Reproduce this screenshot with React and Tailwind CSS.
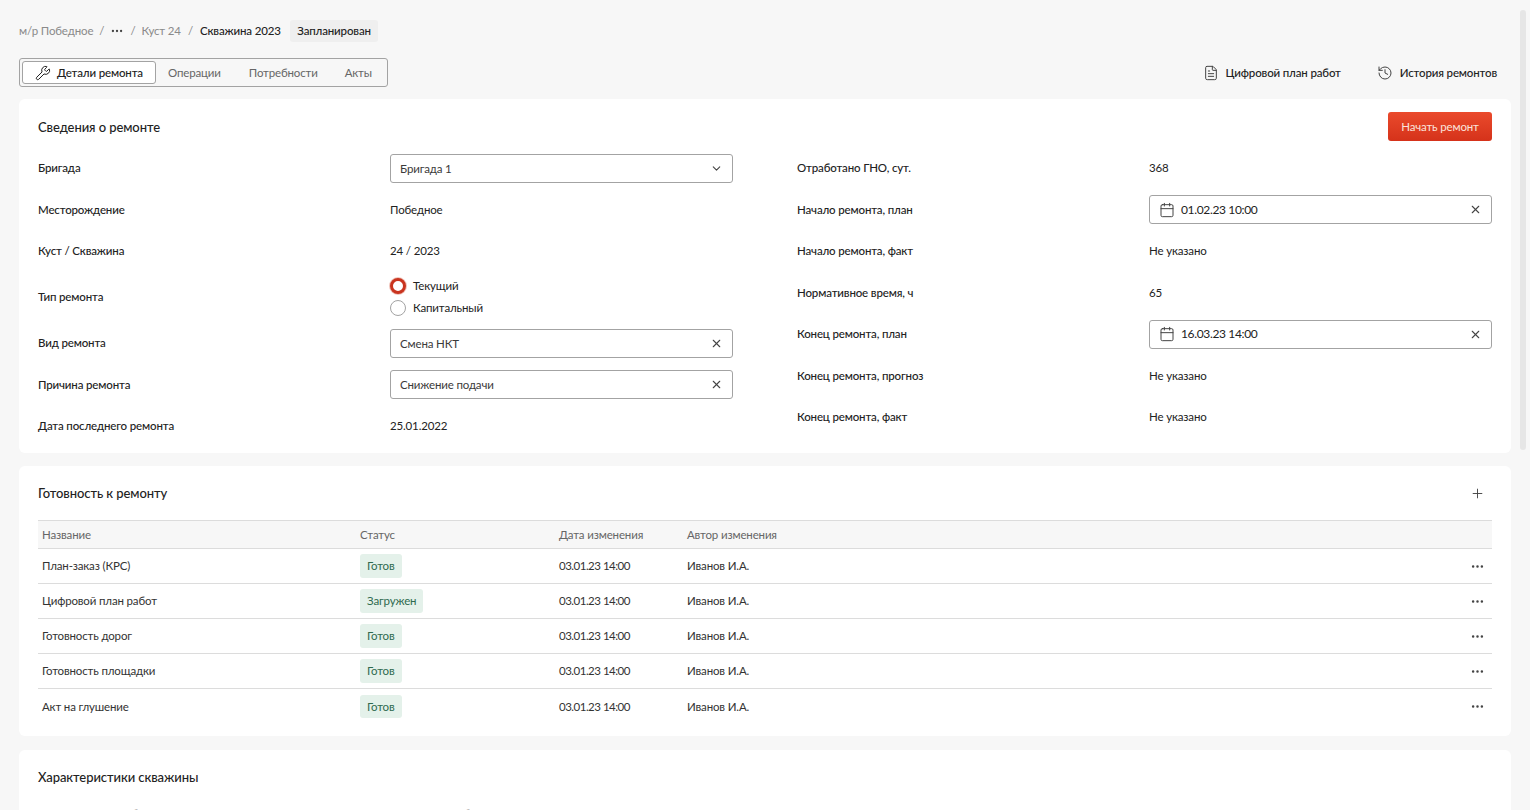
import { Calendar, ChevronDown, Ellipsis, FileText, History, Plus, Wrench, X } from 'lucide-react';

const leftRows = [
  { label: 'Бригада', type: 'select', value: 'Бригада 1' },
  { label: 'Месторождение', value: 'Победное' },
  { label: 'Куст / Скважина', value: '24 / 2023' },
  { label: 'Тип ремонта', type: 'radio' },
  { label: 'Вид ремонта', type: 'input', value: 'Смена НКТ' },
  { label: 'Причина ремонта', type: 'input', value: 'Снижение подачи' },
  { label: 'Дата последнего ремонта', value: '25.01.2022' }
];

const rightRows = [
  { label: 'Отработано ГНО, сут.', value: '368' },
  { label: 'Начало ремонта, план', type: 'date', value: '01.02.23 10:00' },
  { label: 'Начало ремонта, факт', value: 'Не указано' },
  { label: 'Нормативное время, ч', value: '65' },
  { label: 'Конец ремонта, план', type: 'date', value: '16.03.23 14:00' },
  { label: 'Конец ремонта, прогноз', value: 'Не указано' },
  { label: 'Конец ремонта, факт', value: 'Не указано' }
];

const readiness = [
  { name: 'План-заказ (КРС)', status: 'Готов' },
  { name: 'Цифровой план работ', status: 'Загружен' },
  { name: 'Готовность дорог', status: 'Готов' },
  { name: 'Готовность площадки', status: 'Готов' },
  { name: 'Акт на глушение', status: 'Готов' }
];

const wellColumns = ['Искусственный забой', 'Текущий забой', 'Диаметр НКТ', 'Максимальный угол'];

const Field = ({ row }) => {
  if (row.type === 'select' || row.type === 'input') {
    return (
      <div className="flex h-[29px] items-center justify-between rounded-[3px] border border-[#a3a3a3] bg-white pl-[9px] pr-[9px] text-[#3a3a3a]">
        {row.value}
        {row.type === 'select' ? (
          <ChevronDown className="h-[13px] w-[13px] text-[#444]" />
        ) : (
          <X className="h-[13px] w-[13px] text-[#444]" />
        )}
      </div>
    );
  }
  if (row.type === 'date') {
    return (
      <div className="flex h-[29px] items-center rounded-[3px] border border-[#a3a3a3] bg-white pl-[9px] pr-[9px] text-[#222]">
        <Calendar className="mr-[6px] h-[16px] w-[16px] text-[#444]" strokeWidth={1.5} />
        <span className="text-[12px] tracking-[-0.35px]">{row.value}</span>
        <X className="ml-auto h-[13px] w-[13px] text-[#444]" />
      </div>
    );
  }
  if (row.type === 'radio') {
    return (
      <div className="flex flex-col gap-[6px] leading-[16px]">
        <div className="flex items-center gap-[7px] text-[#222]">
          <span className="h-[16px] w-[16px] rounded-full border-[3px] border-[#c9341f] bg-white shadow-[0_0_0_1px_#f0c4bb]" />
          Текущий
        </div>
        <div className="flex items-center gap-[7px] text-[#222]">
          <span className="h-[16px] w-[16px] rounded-full border border-[#a3a3a3] bg-white" />
          Капитальный
        </div>
      </div>
    );
  }
  return <span className="pb-[1px] text-[#222]">{row.value}</span>;
};

const InfoColumn = ({ rows }) => (
  <div>
    {rows.map((row) => (
      <div
        key={row.label}
        className={`grid grid-cols-[352px_1fr] items-center ${row.type === 'radio' ? 'h-[50.5px]' : 'h-[41.5px]'}`}
      >
        <span className="pb-[1px] font-medium text-[#222]">{row.label}</span>
        <Field row={row} />
      </div>
    ))}
  </div>
);

const App = () => {
  return (
    <div className="relative h-screen overflow-hidden bg-[#f7f7f7] pl-[19px] pr-[19px] font-['Lato','Liberation_Sans',sans-serif] text-[11.5px] tracking-[-0.15px]">
      <div className="flex h-[58px] items-center gap-[6px] pt-[4px] text-[#8a8a8a]">
        <span>м/р Победное</span>
        <span>/</span>
        <Ellipsis className="h-[14px] w-[14px] text-[#444]" />
        <span>/</span>
        <span>Куст 24</span>
        <span className="ml-[1px]">/</span>
        <span className="ml-[1px] font-medium text-[#222]">Скважина 2023</span>
        <span className="ml-[3px] rounded-[3px] bg-[#efefef] px-[7.5px] py-[2px] font-medium text-[#222]">Запланирован</span>
      </div>

      <div className="flex items-center justify-between">
        <div className="flex h-[29px] w-[369px] items-center rounded-[3px] border border-[#a3a3a3] pl-[2px] text-[#666]">
          <div className="flex h-[23px] w-[134px] items-center justify-center gap-[6px] rounded-[3px] border border-[#a3a3a3] bg-white font-medium text-[#222]">
            <Wrench className="h-[16px] w-[16px]" strokeWidth={1.5} />
            Детали ремонта
          </div>
          <span className="ml-[12px]">Операции</span>
          <span className="ml-[28px]">Потребности</span>
          <span className="ml-[27px]">Акты</span>
        </div>
        <div className="flex items-center pr-[14px] font-medium text-[#222]">
          <FileText className="mr-[7px] h-[16px] w-[16px] text-[#444]" strokeWidth={1.5} />
          Цифровой план работ
          <History className="ml-[36px] mr-[7px] h-[16px] w-[16px] text-[#444]" strokeWidth={1.5} />
          История ремонтов
        </div>
      </div>

      <section className="mt-[12px] h-[354px] rounded-[6px] bg-white px-[19px]">
        <div className="mb-[6.5px] box-content flex h-[29px] items-center justify-between pt-[13px]">
          <h2 className="pt-[2px] text-[13px] font-medium tracking-[-0.08px] text-[#222]">Сведения о ремонте</h2>
          <button className="h-[29px] w-[104px] rounded-[3px] bg-gradient-to-b from-[#ea4a2c] to-[#d5321a] text-[#fbe3dc]">
            Начать ремонт
          </button>
        </div>
        <div className="grid grid-cols-2 gap-[64px]">
          <InfoColumn rows={leftRows} />
          <InfoColumn rows={rightRows} />
        </div>
      </section>

      <section className="mt-[13px] h-[270px] rounded-[6px] bg-white px-[19px]">
        <div className="flex h-[54px] items-center justify-between">
          <h2 className="pt-[2px] text-[13px] font-medium tracking-[-0.08px] text-[#222]">Готовность к ремонту</h2>
          <Plus className="mr-[7px] h-[15px] w-[15px] text-[#444]" strokeWidth={1.5} />
        </div>
        <div className="grid h-[29px] grid-cols-[318px_199px_128px_1fr] items-center border-y border-[#dcdcdc] bg-[#f7f7f7] px-[4px] text-[#666]">
          <span>Название</span>
          <span>Статус</span>
          <span>Дата изменения</span>
          <span>Автор изменения</span>
        </div>
        {readiness.map((item, index) => (
          <div
            key={item.name}
            className={`grid h-[35px] grid-cols-[318px_199px_128px_1fr_auto] items-center px-[4px] text-[#333] ${index < readiness.length - 1 ? 'border-b border-[#dcdcdc]' : ''}`}
          >
            <span>{item.name}</span>
            <span>
              <span className="inline-block rounded-[3px] bg-[#e4f1ea] px-[7px] py-[3px] text-[#2f6b4f]">{item.status}</span>
            </span>
            <span className="tracking-[-0.5px]">03.01.23 14:00</span>
            <span>Иванов И.А.</span>
            <Ellipsis className="mr-[3px] h-[15px] w-[15px] text-[#444]" />
          </div>
        ))}
      </section>

      <section className="mt-[14px] rounded-[6px] bg-white px-[19px]">
        <div className="flex h-[54px] items-center">
          <h2 className="pt-[2px] text-[13px] font-medium tracking-[-0.08px] text-[#222]">Характеристики скважины</h2>
        </div>
        <div className="grid grid-cols-4 gap-x-[13px] pt-[1px] text-[#666]">
          {wellColumns.map((name) => (
            <span key={name}>{name}</span>
          ))}
        </div>
      </section>

      <div className="absolute right-[4px] top-[10px] h-[440px] w-[6px] rounded-full bg-[#e6e6e6]" />
    </div>
  );
};

export default App;
